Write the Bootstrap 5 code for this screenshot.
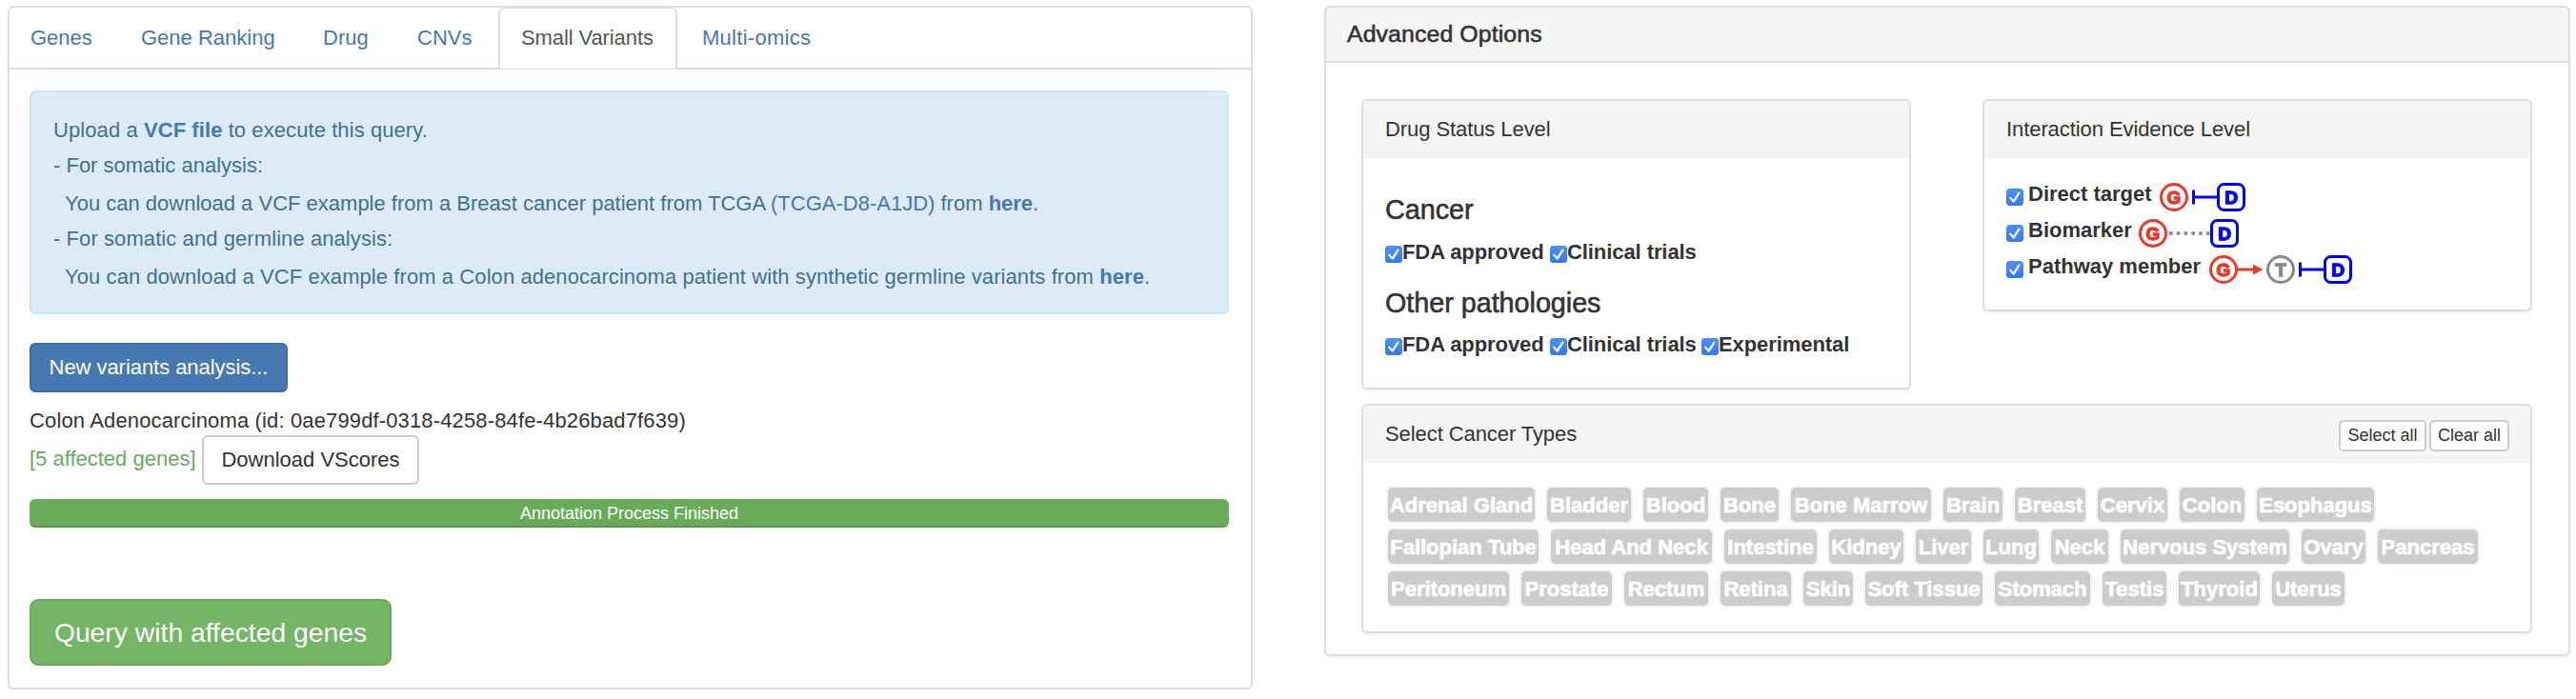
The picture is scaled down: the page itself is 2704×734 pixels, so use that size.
<!DOCTYPE html>
<html lang="en">
<head>
<meta charset="utf-8">
<title>Small Variants query</title>
<link rel="stylesheet" href="https://cdn.jsdelivr.net/npm/bootstrap@5.3.0/dist/css/bootstrap.min.css">
<style>
body{font-family:"Liberation Sans",Arial,sans-serif;font-size:22px;color:#333;background:#fff;line-height:37px;white-space:nowrap;overflow:hidden;font-kerning:normal}
a{color:#4578b3;text-decoration:none}
.panel{border:2px solid #ddd;border-radius:6px;background:#fff;box-shadow:0 2px 2px rgba(0,0,0,.05);overflow:hidden}
.panel-query{width:1307px;height:718px;margin-left:8px}
.panel-adv{width:1308px;height:683px;margin-left:75px}
.nav-tabs{--bs-nav-tabs-border-width:2px;--bs-nav-tabs-border-color:#ddd;height:65px;border-bottom:2px solid #ddd}
.nav-tabs .nav-link{height:63px;padding:0 0 0 22px;line-height:63px;color:#4578b3;border:0;margin:0}
.nav-tabs .nav-link.active{color:#555;height:64px;border:2px solid #ddd;border-top-width:1px;border-bottom:0;line-height:61px;border-radius:6px 6px 0 0;letter-spacing:-.1px}
.t1{width:116px}.t2{width:191px}.t3{width:99px}.t4{width:107px}.t5{width:188px;margin-right:4px}.t6{letter-spacing:.28px}
.query-body{padding:22px 23px 0 21px}
.alert-vcf{background:#ddebf6;border:2px solid #c4e7f0;border-radius:6px;color:#42718f;height:235px;padding:21px 23px 0;margin:0}
.indent{padding:3px 0 0 12px}
.stretch{letter-spacing:.08px}
.btn{font-size:22px;border-width:2px;border-radius:6px;padding:0;line-height:46px;white-space:nowrap}
.btn-new{width:271px;height:52px;margin-top:30px;background:#4678b2;border-color:#3f6ca6;color:#fff;letter-spacing:-.05px}
.btn-plain{background:#fff;border-color:#ccc;color:#333}
.btn-down{width:228px;height:52px;margin-left:6px}
.btn-query{width:380px;height:70px;margin-top:75px;font-size:28.3px;line-height:66px;border-radius:9px;background:#74b566;border-color:#68ab5a;color:#fff}
.job{height:45px;padding-top:11px;letter-spacing:.14px}
.affected{color:#67ac5b;width:175px;line-height:49px}
.progress{height:30px;margin-top:15px;border-radius:6px;font-size:18px}
.progress-bar{background:#68ac5a;padding-top:1px;box-shadow:inset 0 -2px 0 rgba(0,0,0,.12)}
.medium{-webkit-text-stroke:.6px #333}
.adv-head{height:58px;line-height:56px;background:#f5f5f5;border-bottom:2px solid #ddd;padding-left:22px;font-size:24.8px;letter-spacing:.13px}
.adv-body{padding:38px 38px 0 37px}
.sub-head{height:60px;line-height:59px;background:#f5f5f5;padding:0 23px;letter-spacing:-.08px}
.panel-drug{width:577px;height:305px}
.panel-inter{width:577px;height:223px}
.panel-cancer{height:241px;margin-top:15px}
.section-title{font-size:28.7px;line-height:40px;height:38px;margin:0}
.check-row{height:32px;line-height:32px;font-weight:700;letter-spacing:-.08px}
.cbox{width:18px;height:18px;flex:none;display:block}
.check-row .cbox{margin-top:4px}
.ev-row{height:38px;font-weight:700}
.ev-row label{line-height:32px;padding-bottom:6px;margin-left:5px}
.ev-row svg text{font:bold 19px "Liberation Sans",Arial,sans-serif;text-anchor:middle;stroke-width:1.3px}
.btn-mini{font-size:18px;height:33px;line-height:29px;border-radius:5px}
.tags{padding:26px 0 0 26px}
.tag-row{gap:13px;margin-bottom:8px}
.tag{height:36px;line-height:37px;border-radius:5px;background:#ccc;color:#fff;font-weight:700;text-align:center;box-shadow:0 0 0 2px #eef7ec;-webkit-text-stroke:.7px #fff}
</style>
</head>
<body>
<svg width="0" height="0" class="position-absolute">
  <defs>
    <linearGradient id="blue" x2="0" y2="1"><stop stop-color="#4b92f8"/><stop offset="1" stop-color="#3478f6"/></linearGradient>
    <symbol id="chk" viewBox="0 0 18 18"><rect width="18" height="18" rx="3.5" fill="url(#blue)"/><path d="M4.2 9.6 7.6 13.6 13.4 4.6" fill="none" stroke="#fff" stroke-width="2.2" stroke-linecap="round" stroke-linejoin="round"/></symbol>
  </defs>
</svg>
<main class="d-flex align-items-start pt-0" style="margin-top:6px">
  <section class="panel panel-query">
    <ul class="nav nav-tabs flex-nowrap">
      <li class="nav-item t1"><a class="nav-link" href="#">Genes</a></li>
      <li class="nav-item t2"><a class="nav-link" href="#">Gene Ranking</a></li>
      <li class="nav-item t3"><a class="nav-link" href="#">Drug</a></li>
      <li class="nav-item t4"><a class="nav-link" href="#">CNVs</a></li>
      <li class="nav-item t5"><a class="nav-link active" href="#">Small Variants</a></li>
      <li class="nav-item t6"><a class="nav-link" href="#">Multi-omics</a></li>
    </ul>
    <div class="query-body">
      <div class="alert alert-vcf">
        <div class="stretch">Upload a <a href="#" class="fw-bold">VCF file</a> to execute this query.</div>
        <div>- For somatic analysis:</div>
        <div class="indent">You can download a VCF example from a Breast cancer patient from TCGA <a href="#">(TCGA-D8-A1JD)</a> from <a href="#" class="fw-bold">here</a>.</div>
        <div class="stretch">- For somatic and germline analysis:</div>
        <div class="indent stretch">You can download a VCF example from a Colon adenocarcinoma patient with synthetic germline variants from <a href="#" class="fw-bold">here</a>.</div>
      </div>
      <button class="btn btn-new d-block">New variants analysis...</button>
      <div class="job">Colon Adenocarcinoma (id: 0ae799df-0318-4258-84fe-4b26bad7f639)</div>
      <div class="d-flex">
        <span class="affected">[5 affected genes]</span>
        <button class="btn btn-plain btn-down">Download VScores</button>
      </div>
      <div class="progress"><div class="progress-bar w-100">Annotation Process Finished</div></div>
      <button class="btn btn-query d-block">Query with affected genes</button>
    </div>
  </section>

  <section class="panel panel-adv">
    <div class="adv-head medium">Advanced Options</div>
    <div class="adv-body">
      <div class="d-flex justify-content-between align-items-start">
        <div class="panel panel-drug">
          <div class="sub-head">Drug Status Level</div>
          <div style="padding:34px 23px 0">
            <h4 class="section-title medium fw-normal">Cancer</h4>
            <div class="check-row d-flex align-items-center" style="margin-top:11px">
              <svg class="cbox"><use href="#chk"/></svg><label style="width:155px">FDA approved</label>
              <svg class="cbox"><use href="#chk"/></svg><label>Clinical trials</label>
            </div>
            <h4 class="section-title medium fw-normal" style="margin-top:17px">Other pathologies</h4>
            <div class="check-row d-flex align-items-center" style="margin-top:10px">
              <svg class="cbox"><use href="#chk"/></svg><label style="width:155px">FDA approved</label>
              <svg class="cbox"><use href="#chk"/></svg><label style="width:141px">Clinical trials</label>
              <svg class="cbox"><use href="#chk"/></svg><label>Experimental</label>
            </div>
          </div>
        </div>
        <div class="panel panel-inter">
          <div class="sub-head">Interaction Evidence Level</div>
          <div style="padding:22px 23px 0">
            <div class="ev-row d-flex align-items-center">
              <svg class="cbox"><use href="#chk"/></svg><label style="width:138px">Direct target</label>
              <svg width="90" height="30"><circle cx="15" cy="15" r="13.5" fill="none" stroke="#ea3829" stroke-width="3"/><text x="15" y="21.5" fill="#ea3829" stroke="#ea3829">G</text><path d="M35.5 7.5v15M35.5 15H60" stroke="#00f" stroke-width="3" fill="none"/><rect x="61.5" y="1.5" width="27" height="27" rx="6" fill="none" stroke="#00f" stroke-width="3"/><text x="75" y="21.5" fill="#00f" stroke="#00f">D</text></svg>
            </div>
            <div class="ev-row d-flex align-items-center">
              <svg class="cbox"><use href="#chk"/></svg><label style="width:116px">Biomarker</label>
              <svg width="105" height="30"><circle cx="15" cy="15" r="13.5" fill="none" stroke="#ea3829" stroke-width="3"/><text x="15" y="21.5" fill="#ea3829" stroke="#ea3829">G</text><path d="M32 15H75" stroke="#888" stroke-width="3.4" stroke-dasharray="3.6 4.2" fill="none"/><rect x="76.5" y="1.5" width="27" height="27" rx="6" fill="none" stroke="#00f" stroke-width="3"/><text x="90" y="21.5" fill="#00f" stroke="#00f">D</text></svg>
            </div>
            <div class="ev-row d-flex align-items-center">
              <svg class="cbox"><use href="#chk"/></svg><label style="width:190px">Pathway member</label>
              <svg width="150" height="30"><circle cx="15" cy="15" r="13.5" fill="none" stroke="#ea3829" stroke-width="3"/><text x="15" y="21.5" fill="#ea3829" stroke="#ea3829">G</text><path d="M29 15H47" stroke="#ea3829" stroke-width="3"/><path d="M46 9.5 56.5 15 46 20.5z" fill="#ea3829"/><circle cx="75" cy="15" r="13.5" fill="none" stroke="#888" stroke-width="3"/><text x="75" y="21.5" fill="#888" stroke="#888">T</text><path d="M95.5 7.5v15M95.5 15H120" stroke="#00f" stroke-width="3" fill="none"/><rect x="121.5" y="1.5" width="27" height="27" rx="6" fill="none" stroke="#00f" stroke-width="3"/><text x="135" y="21.5" fill="#00f" stroke="#00f">D</text></svg>
            </div>
          </div>
        </div>
      </div>
      <div class="panel panel-cancer">
        <div class="sub-head d-flex">
          <span class="me-auto">Select Cancer Types</span>
          <button class="btn btn-plain btn-mini" style="width:92px;margin-top:15px">Select all</button>
          <button class="btn btn-plain btn-mini" style="width:84px;margin:15px -1px 0 3px">Clear all</button>
        </div>
        <div class="tags" id="tags"></div>
      </div>
    </div>
  </section>
</main>
<script src="https://cdn.jsdelivr.net/npm/bootstrap@5.3.0/dist/js/bootstrap.bundle.min.js"></script>
<script>
// Cancer types, row by row, each with the width of its tag
const rows = [
  [["Adrenal Gland",154],["Bladder",88],["Blood",68],["Bone",61],["Bone Marrow",147],["Brain",62],["Breast",74],["Cervix",73],["Colon",68],["Esophagus",123]],
  [["Fallopian Tube",158],["Head And Neck",169],["Intestine",97],["Kidney",78],["Liver",58],["Lung",58],["Neck",60],["Nervous System",177],["Ovary",67],["Pancreas",105]],
  [["Peritoneum",127],["Prostate",95],["Rectum",88],["Retina",74],["Skin",52],["Soft Tissue",123],["Stomach",100],["Testis",67],["Thyroid",85],["Uterus",76]]
];
document.getElementById("tags").innerHTML = rows.map(r =>
  `<div class="tag-row d-flex">${r.map(([n,w]) => `<span class="tag" style="width:${w}px">${n}</span>`).join("")}</div>`).join("");
</script>
</body>
</html>
